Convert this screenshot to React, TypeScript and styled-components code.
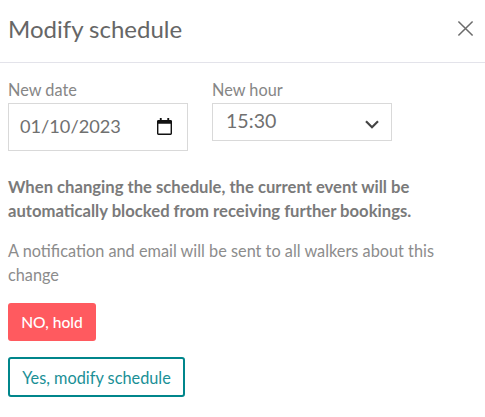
import React from 'react'
import styled, { createGlobalStyle } from 'styled-components'

const GlobalStyle = createGlobalStyle`
  html, body {
    margin: 0;
    background: #fff;
    font-family: Lato, 'Noto Sans', sans-serif;
  }
`

export default function App() {
  return (
    <>
      <GlobalStyle />
      <Modal>
        <Header>
          <Title>Modify schedule</Title>
          <CloseButton aria-label="Close">
            <svg width="17" height="17" viewBox="0 0 18 18" fill="none" stroke="#6b6b6b" strokeWidth="1.6">
              <path d="M1.5 1.5l15 15M16.5 1.5l-15 15" />
            </svg>
          </CloseButton>
        </Header>
        <Body>
          <Fields>
            <Field>
              <Label>New date</Label>
              <DateBox>
                <span>01/10/2023</span>
                <svg width="15" height="17" viewBox="0 0 16 18" fill="#111">
                  <path d="M3 0h2v2h6V0h2v2h1.5A1.5 1.5 0 0 1 16 3.5v13a1.5 1.5 0 0 1-1.5 1.5h-13A1.5 1.5 0 0 1 0 16.500v-13A1.500 1.500 0 0 1 1.500 2H3V0zM1.500 6v10.500h13V6h-13z" />
                </svg>
              </DateBox>
            </Field>
            <Field>
              <Label>New hour</Label>
              <SelectBox>
                <span>15:30</span>
                <Chevron width="14" height="9" viewBox="0 0 14 9" fill="none" stroke="#444" strokeWidth="2.200">
                  <path d="M1 1.200l6 6 6-6" />
                </Chevron>
              </SelectBox>
            </Field>
          </Fields>
          <Warning>
            When changing the schedule, the current event will be automatically blocked from
            receiving further bookings.
          </Warning>
          <Note>A notification and email will be sent to all walkers about this change</Note>
          <Actions>
            <DangerButton>NO, hold</DangerButton>
            <OutlineButton>Yes, modify schedule</OutlineButton>
          </Actions>
        </Body>
      </Modal>
    </>
  )
}

const Modal = styled.div`
  width: 485px;
  height: 417px;
  overflow: hidden;
  background: #fff;
`

const Header = styled.div`
  height: 63px;
  box-sizing: border-box;
  padding: 0 11px 0 8px;
  display: flex;
  align-items: center;
  justify-content: space-between;
  border-bottom: 1px solid #e3e3ea;
`

const Title = styled.h2`
  margin: 0 0 6px;
  font-size: 24px;
  font-weight: 400;
  color: #666;
`

const CloseButton = styled.button`
  border: 0;
  background: none;
  padding: 0;
  display: flex;
  margin-bottom: 6px;
`

const Body = styled.div`
  padding: 14px 8px 0;
`

const Fields = styled.div`
  display: flex;
  align-items: flex-start;
  gap: 24px;
`

const Field = styled.div`
  width: 180px;
`

const Label = styled.div`
  font-size: 16.3px;
  line-height: 26px;
  color: #868686;
`

const DateBox = styled.div`
  height: 48px;
  box-sizing: border-box;
  padding: 0 15px 2px 11px;
  display: flex;
  align-items: center;
  justify-content: space-between;
  border: 1px solid #d9d9d9;
  font-size: 18.2px;
  color: #707070;
`

const SelectBox = styled.div`
  height: 38px;
  box-sizing: border-box;
  padding: 0 12px 4px 13px;
  display: flex;
  align-items: center;
  justify-content: space-between;
  border: 1px solid #d9d9d9;
  font-size: 19.6px;
  color: #707070;
`

const Chevron = styled.svg`
  margin-top: 8px;
`

const Warning = styled.p`
  margin: 24px 0 0;
  font-size: 16.65px;
  line-height: 24px;
  font-weight: 700;
  color: #7a7a7a;
`

const Note = styled.p`
  margin: 16px 0 0;
  font-size: 16.3px;
  line-height: 24px;
  color: #8c8c8c;
`

const Actions = styled.div`
  margin-top: 16px;
  display: flex;
  flex-direction: column;
  align-items: flex-start;
  gap: 16px;
`

const DangerButton = styled.button`
  height: 38px;
  width: 88px;
  padding: 0;
  border: 0;
  border-radius: 3px;
  background: #ff5a5f;
  color: #fff;
  font: 500 15.6px Lato, 'Noto Sans', sans-serif;
`

const OutlineButton = styled.button`
  height: 40px;
  width: 177px;
  padding: 0;
  border: 2px solid #00868b;
  border-radius: 3px;
  background: #fff;
  color: #1a9096;
  font: 400 16.3px Lato, 'Noto Sans', sans-serif;
`
